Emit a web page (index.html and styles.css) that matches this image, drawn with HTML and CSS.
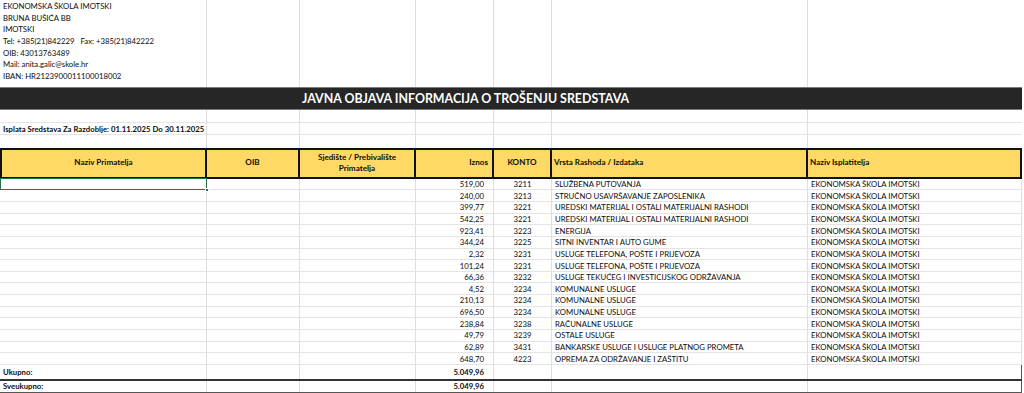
FILE: index.html
```html
<!DOCTYPE html>
<html lang="hr">
<head>
<meta charset="utf-8">
<title>Javna objava informacija o trošenju sredstava</title>
<link rel="stylesheet" href="styles.css">
</head>
<body>
<div class="sheet">
  <section class="info">
    <div class="row r-info"><div class="c">EKONOMSKA ŠKOLA IMOTSKI</div><div class="c"></div><div class="c"></div><div class="c"></div><div class="c"></div><div class="c"></div><div class="c nob"></div></div>
    <div class="row r-info"><div class="c">BRUNA BUŠIĆA BB</div><div class="c"></div><div class="c"></div><div class="c"></div><div class="c"></div><div class="c"></div><div class="c nob"></div></div>
    <div class="row r-info"><div class="c">IMOTSKI</div><div class="c"></div><div class="c"></div><div class="c"></div><div class="c"></div><div class="c"></div><div class="c nob"></div></div>
    <div class="row r-info"><div class="c">Tel: +385(21)842229&nbsp;&nbsp;&nbsp;Fax: +385(21)842222</div><div class="c"></div><div class="c"></div><div class="c"></div><div class="c"></div><div class="c"></div><div class="c nob"></div></div>
    <div class="row r-info"><div class="c">OIB: 43013763489</div><div class="c"></div><div class="c"></div><div class="c"></div><div class="c"></div><div class="c"></div><div class="c nob"></div></div>
    <div class="row r-info"><div class="c">Mail: anita.galic@skole.hr</div><div class="c"></div><div class="c"></div><div class="c"></div><div class="c"></div><div class="c"></div><div class="c nob"></div></div>
    <div class="row r-info"><div class="c">IBAN: HR2123900011100018002</div><div class="c"></div><div class="c"></div><div class="c"></div><div class="c"></div><div class="c"></div><div class="c nob"></div></div>
    <div class="row r-gap"><div class="c"></div><div class="c"></div><div class="c"></div><div class="c"></div><div class="c"></div><div class="c"></div><div class="c nob"></div></div>
  </section>

  <h1 class="title"><span>JAVNA OBJAVA INFORMACIJA O TROŠENJU SREDSTAVA</span></h1>

  <div class="row r-empty lined"><div class="c"></div><div class="c"></div><div class="c"></div><div class="c"></div><div class="c"></div><div class="c"></div><div class="c nob"></div></div>
  <div class="row r-sub lined"><div class="c b">Isplata Sredstava Za Razdoblje: 01.11.2025 Do 30.11.2025</div><div class="c"></div><div class="c"></div><div class="c"></div><div class="c"></div><div class="c"></div><div class="c nob"></div></div>
  <div class="row r-empty2"><div class="c"></div><div class="c"></div><div class="c"></div><div class="c"></div><div class="c"></div><div class="c"></div><div class="c nob"></div></div>

  <div class="row r-head">
    <div class="h center">Naziv Primatelja</div>
    <div class="h center">OIB</div>
    <div class="h center">Sjedište / Prebivalište<br>Primatelja</div>
    <div class="h right">Iznos</div>
    <div class="h center">KONTO</div>
    <div class="h left">Vrsta Rashoda / Izdataka</div>
    <div class="h left">Naziv Isplatitelja</div>
  </div>

  <section class="data">
    <div class="row r-data"><div class="c sel"></div><div class="c"></div><div class="c"></div><div class="c num">519,00</div><div class="c mid">3211</div><div class="c">SLUŽBENA PUTOVANJA</div><div class="c">EKONOMSKA ŠKOLA IMOTSKI</div></div>
    <div class="row r-data"><div class="c"></div><div class="c"></div><div class="c"></div><div class="c num">240,00</div><div class="c mid">3213</div><div class="c">STRUČNO USAVRŠAVANJE ZAPOSLENIKA</div><div class="c">EKONOMSKA ŠKOLA IMOTSKI</div></div>
    <div class="row r-data"><div class="c"></div><div class="c"></div><div class="c"></div><div class="c num">399,77</div><div class="c mid">3221</div><div class="c">UREDSKI MATERIJAL I OSTALI MATERIJALNI RASHODI</div><div class="c">EKONOMSKA ŠKOLA IMOTSKI</div></div>
    <div class="row r-data"><div class="c"></div><div class="c"></div><div class="c"></div><div class="c num">542,25</div><div class="c mid">3221</div><div class="c">UREDSKI MATERIJAL I OSTALI MATERIJALNI RASHODI</div><div class="c">EKONOMSKA ŠKOLA IMOTSKI</div></div>
    <div class="row r-data"><div class="c"></div><div class="c"></div><div class="c"></div><div class="c num">923,41</div><div class="c mid">3223</div><div class="c">ENERGIJA</div><div class="c">EKONOMSKA ŠKOLA IMOTSKI</div></div>
    <div class="row r-data"><div class="c"></div><div class="c"></div><div class="c"></div><div class="c num">344,24</div><div class="c mid">3225</div><div class="c">SITNI INVENTAR I AUTO GUME</div><div class="c">EKONOMSKA ŠKOLA IMOTSKI</div></div>
    <div class="row r-data"><div class="c"></div><div class="c"></div><div class="c"></div><div class="c num">2,32</div><div class="c mid">3231</div><div class="c">USLUGE TELEFONA, POŠTE I PRIJEVOZA</div><div class="c">EKONOMSKA ŠKOLA IMOTSKI</div></div>
    <div class="row r-data"><div class="c"></div><div class="c"></div><div class="c"></div><div class="c num">101,24</div><div class="c mid">3231</div><div class="c">USLUGE TELEFONA, POŠTE I PRIJEVOZA</div><div class="c">EKONOMSKA ŠKOLA IMOTSKI</div></div>
    <div class="row r-data"><div class="c"></div><div class="c"></div><div class="c"></div><div class="c num">66,36</div><div class="c mid">3232</div><div class="c">USLUGE TEKUĆEG I INVESTICIJSKOG ODRŽAVANJA</div><div class="c">EKONOMSKA ŠKOLA IMOTSKI</div></div>
    <div class="row r-data"><div class="c"></div><div class="c"></div><div class="c"></div><div class="c num">4,52</div><div class="c mid">3234</div><div class="c">KOMUNALNE USLUGE</div><div class="c">EKONOMSKA ŠKOLA IMOTSKI</div></div>
    <div class="row r-data"><div class="c"></div><div class="c"></div><div class="c"></div><div class="c num">210,13</div><div class="c mid">3234</div><div class="c">KOMUNALNE USLUGE</div><div class="c">EKONOMSKA ŠKOLA IMOTSKI</div></div>
    <div class="row r-data"><div class="c"></div><div class="c"></div><div class="c"></div><div class="c num">696,50</div><div class="c mid">3234</div><div class="c">KOMUNALNE USLUGE</div><div class="c">EKONOMSKA ŠKOLA IMOTSKI</div></div>
    <div class="row r-data"><div class="c"></div><div class="c"></div><div class="c"></div><div class="c num">238,84</div><div class="c mid">3238</div><div class="c">RAČUNALNE USLUGE</div><div class="c">EKONOMSKA ŠKOLA IMOTSKI</div></div>
    <div class="row r-data"><div class="c"></div><div class="c"></div><div class="c"></div><div class="c num">49,79</div><div class="c mid">3239</div><div class="c">OSTALE USLUGE</div><div class="c">EKONOMSKA ŠKOLA IMOTSKI</div></div>
    <div class="row r-data"><div class="c"></div><div class="c"></div><div class="c"></div><div class="c num">62,89</div><div class="c mid">3431</div><div class="c">BANKARSKE USLUGE I USLUGE PLATNOG PROMETA</div><div class="c">EKONOMSKA ŠKOLA IMOTSKI</div></div>
    <div class="row r-data"><div class="c"></div><div class="c"></div><div class="c"></div><div class="c num">648,70</div><div class="c mid">4223</div><div class="c">OPREMA ZA ODRŽAVANJE I ZAŠTITU</div><div class="c">EKONOMSKA ŠKOLA IMOTSKI</div></div>
  </section>

  <div class="row r-total"><div class="c b">Ukupno:</div><div class="c"></div><div class="c"></div><div class="c num b">5.049,96</div><div class="c"></div><div class="c"></div><div class="c"></div></div>
  <div class="row r-grand"><div class="c b">Sveukupno:</div><div class="c"></div><div class="c"></div><div class="c num b">5.049,96</div><div class="c"></div><div class="c"></div><div class="c"></div></div>
</div>
</body>
</html>
```

FILE: styles.css
```css
html, body {
  margin: 0;
  padding: 0;
  background: #ffffff;
}

body {
  font-family: Lato, "Liberation Sans", sans-serif;
  font-size: 7.75px;
  color: #0d0d0d;
}

.sheet {
  width: 1022px;
}

.row {
  display: grid;
  grid-template-columns: 207px 93px 116px 78px 58px 256px 214px;
}

.c {
  box-sizing: border-box;
  border-right: 1px solid #dedede;
  padding: 0 3px;
  white-space: nowrap;
  overflow: visible;
  display: flex;
  align-items: center;
  min-width: 0;
}

.c.nob {
  border-right: none;
}

.b {
  font-weight: 700;
}

.r-info {
  height: 11.7px;
}

.r-gap {
  height: 5px;
}

.title {
  margin: 0;
  height: 23px;
  box-sizing: border-box;
  background: #262626;
  border-top: 1px solid #7a7a7a;
  border-bottom: 1px solid #7a7a7a;
  display: flex;
  align-items: center;
  padding-left: 302px;
  color: #ffffff;
  font-size: 12.4px;
  font-weight: 700;
  letter-spacing: 0;
}

.lined .c {
  border-bottom: 1px solid #e4e4e4;
}

.r-empty {
  height: 13.5px;
}

.r-sub {
  height: 11.5px;
}

.r-empty2 {
  height: 13px;
}

.r-head {
  height: 31px;
  box-sizing: border-box;
  border-top: 2px solid #111;
  border-bottom: 2px solid #111;
  border-left: 2px solid #111;
  background: #ffd966;
  grid-template-columns: 205px 93px 116px 78px 58px 256px 214px;
  font-size: 8.1px;
}

.h {
  box-sizing: border-box;
  border-right: 2px solid #111;
  display: flex;
  align-items: center;
  font-weight: 700;
  line-height: 1.45;
  padding: 0 3px;
  white-space: nowrap;
}

.h.center {
  justify-content: center;
  text-align: center;
}

.h.right {
  justify-content: flex-end;
  padding-right: 4px;
}

.h.left {
  justify-content: flex-start;
  padding-left: 2px;
}

.r-data {
  height: 11.625px;
}

.r-data .c {
  border-bottom: 1px solid #e4e4e4;
}

.num {
  justify-content: flex-end;
  padding-right: 9px;
}

.mid {
  justify-content: center;
}

.sel {
  position: relative;
}

.sel::after {
  content: "";
  position: absolute;
  left: 0;
  top: -1px;
  right: -1px;
  bottom: -1px;
  border: 1px solid #217346;
}

.sel::before {
  content: "";
  position: absolute;
  right: -3px;
  bottom: -3px;
  width: 4px;
  height: 4px;
  background: #217346;
  border: 1px solid #ffffff;
  box-sizing: border-box;
  z-index: 1;
}

.r-total {
  height: 16px;
  box-sizing: border-box;
  border-bottom: 2px solid #333;
}

.r-grand {
  height: 12px;
  box-sizing: border-box;
  border-bottom: 1px solid #555;
}

.r-grand .c:last-child,
.r-total .c:last-child {
  border-right: 1px solid #555;
}
```
